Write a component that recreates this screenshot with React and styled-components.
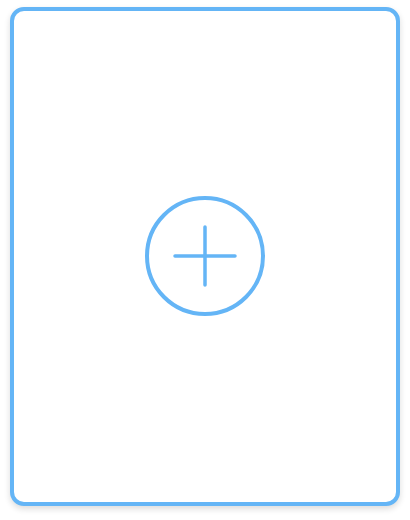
import React from "react";
import styled, { createGlobalStyle } from "styled-components";

const Global = createGlobalStyle`
  html, body { margin: 0; padding: 0; background: #ffffff; }
  body { font-family: "Liberation Sans", Arial, sans-serif; }
`;

const Page = styled.div`
  padding: 7px 10px 0 10px;
  width: 410px;
  height: 520px;
  box-sizing: border-box;
`;

const Card = styled.button`
  width: 390px;
  height: 499px;
  box-sizing: border-box;
  border: 4px solid #64b5f6;
  border-radius: 14px;
  background: #ffffff;
  box-shadow: 0 3px 6px rgba(0, 0, 0, 0.14);
  display: flex;
  align-items: center;
  justify-content: center;
  padding: 0 0 1px 0;
  cursor: pointer;
`;

const AddIcon = ({ color }) => (
  <svg width="120" height="120" viewBox="0 0 120 120" fill="none">
    <circle cx="60" cy="60" r="58" stroke={color} strokeWidth="4" />
    <path d="M30 60H90M60 31V89" stroke={color} strokeWidth="3.5" strokeLinecap="round" />
  </svg>
);

export default function App() {
  return (
    <>
      <Global />
      <Page>
        <Card aria-label="Add">
          <AddIcon color="#64b5f6" />
        </Card>
      </Page>
    </>
  );
}
